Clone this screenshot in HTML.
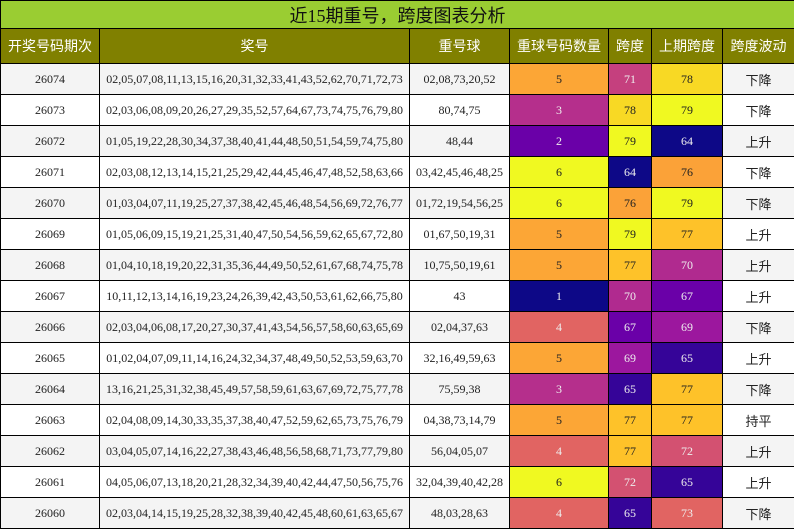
<!DOCTYPE html><html><head><meta charset="utf-8"><style>
body{margin:0;width:794px;height:529px;overflow:hidden;background:#fff}
table{border-collapse:collapse;table-layout:fixed;width:794px;font-family:"Liberation Serif","Noto Serif CJK SC",serif}
td{border:1px solid #000;text-align:center;padding:0;font-size:12px;color:#222;white-space:nowrap;overflow:hidden}
.t td{background:#9acd32;height:27px;font-size:18px;color:#111;font-family:"Liberation Serif","Noto Sans CJK SC",sans-serif;border-top:1px solid #000}
.h td{background:#808000;color:#fff;height:34px;font-size:14px;font-family:"Liberation Sans","Noto Sans CJK SC",sans-serif}
.r td{height:30px}
.r:nth-child(odd) td{background:#f4f4f4}
td.z{font-family:"Liberation Sans","Noto Sans CJK SC",sans-serif;font-size:13px}
.w{color:#eee!important}
</style></head><body><table>
<colgroup><col style="width:99px"><col style="width:310px"><col style="width:100px"><col style="width:99px"><col style="width:43px"><col style="width:71px"><col style="width:72px"></colgroup>
<tr class="t"><td colspan="7">近15期重号，跨度图表分析</td></tr>
<tr class="h"><td>开奖号码期次</td><td>奖号</td><td>重号球</td><td>重球号码数量</td><td>跨度</td><td>上期跨度</td><td>跨度波动</td></tr>
<tbody id="b"></tbody></table>
<script>
var C={1:'#0d0887',2:'#6a00a8',3:'#b52f8c',4:'#e16462',5:'#fca636',6:'#f0f921'};
var S={64:'#0d0887',65:'#350498',67:'#6a00a8',69:'#9c179e',70:'#b02a8f',71:'#c5407e',72:'#d35171',73:'#e16462',76:'#fba238',77:'#fec229',78:'#f8d924',79:'#f0f921'};
var W={1:1,2:1,3:1,4:1,64:1,65:1,67:1,69:1,70:1,71:1,72:1,73:1};
var d=[
["26074","02,05,07,08,11,13,15,16,20,31,32,33,41,43,52,62,70,71,72,73","02,08,73,20,52",5,71,78,"下降"],
["26073","02,03,06,08,09,20,26,27,29,35,52,57,64,67,73,74,75,76,79,80","80,74,75",3,78,79,"下降"],
["26072","01,05,19,22,28,30,34,37,38,40,41,44,48,50,51,54,59,74,75,80","48,44",2,79,64,"上升"],
["26071","02,03,08,12,13,14,15,21,25,29,42,44,45,46,47,48,52,58,63,66","03,42,45,46,48,25",6,64,76,"下降"],
["26070","01,03,04,07,11,19,25,27,37,38,42,45,46,48,54,56,69,72,76,77","01,72,19,54,56,25",6,76,79,"下降"],
["26069","01,05,06,09,15,19,21,25,31,40,47,50,54,56,59,62,65,67,72,80","01,67,50,19,31",5,79,77,"上升"],
["26068","01,04,10,18,19,20,22,31,35,36,44,49,50,52,61,67,68,74,75,78","10,75,50,19,61",5,77,70,"上升"],
["26067","10,11,12,13,14,16,19,23,24,26,39,42,43,50,53,61,62,66,75,80","43",1,70,67,"上升"],
["26066","02,03,04,06,08,17,20,27,30,37,41,43,54,56,57,58,60,63,65,69","02,04,37,63",4,67,69,"下降"],
["26065","01,02,04,07,09,11,14,16,24,32,34,37,48,49,50,52,53,59,63,70","32,16,49,59,63",5,69,65,"上升"],
["26064","13,16,21,25,31,32,38,45,49,57,58,59,61,63,67,69,72,75,77,78","75,59,38",3,65,77,"下降"],
["26063","02,04,08,09,14,30,33,35,37,38,40,47,52,59,62,65,73,75,76,79","04,38,73,14,79",5,77,77,"持平"],
["26062","03,04,05,07,14,16,22,27,38,43,46,48,56,58,68,71,73,77,79,80","56,04,05,07",4,77,72,"上升"],
["26061","04,05,06,07,13,18,20,21,28,32,34,39,40,42,44,47,50,56,75,76","32,04,39,40,42,28",6,72,65,"上升"],
["26060","02,03,04,14,15,19,25,28,32,38,39,40,42,45,48,60,61,63,65,67","48,03,28,63",4,65,73,"下降"]];
var h='';d.forEach(function(r){
function c(v,m){return '<td class="'+(W[v]?'w':'')+'" style="background:'+m[v]+'!important">'+v+'</td>';}
h+='<tr class="r"><td>'+r[0]+'</td><td style="font-size:12px">'+r[1]+'</td><td>'+r[2]+'</td>'+c(r[3],C)+c(r[4],S)+c(r[5],S)+'<td class="z">'+r[6]+'</td></tr>';});
document.getElementById('b').innerHTML=h;
document.querySelectorAll('td[style*=background]').forEach(function(e){e.style.setProperty('background',e.style.background,'important')});
</script></body></html>
